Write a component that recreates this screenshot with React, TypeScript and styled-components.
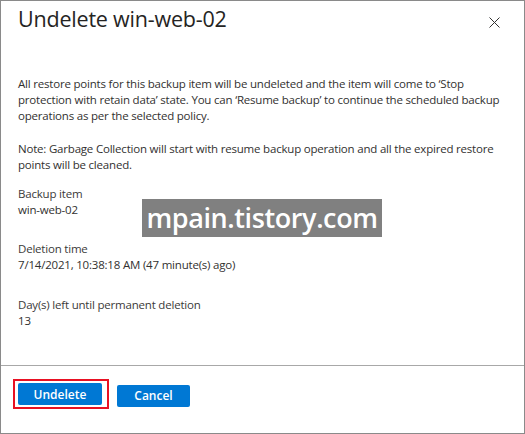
import React from 'react';
import styled, { createGlobalStyle } from 'styled-components';

const GlobalStyle = createGlobalStyle`
  html, body {
    margin: 0;
    padding: 0;
    background: #ffffff;
  }
  body {
    font-family: 'Open Sans', 'Noto Sans', sans-serif;
    color: #323130;
  }
`;

const Dialog = styled.div`
  position: relative;
  width: 525px;
  height: 434px;
  box-sizing: border-box;
  border: 1px solid #8a8a8a;
  background: #ffffff;
  display: flex;
  flex-direction: column;
`;

const Header = styled.div`
  display: flex;
  align-items: flex-start;
  justify-content: space-between;
  padding: 0 23px 0 17px;
  height: 56px;
`;

const Title = styled.h1`
  margin: 0;
  font-size: 21.5px;
  line-height: 36px;
  font-weight: 400;
  color: #252423;
  letter-spacing: -0.2px;
`;

const CloseButton = styled.button`
  margin-top: 14px;
  width: 14px;
  height: 14px;
  padding: 0;
  border: 0;
  background: transparent;
  display: flex;
  align-items: center;
  justify-content: center;
  cursor: pointer;
`;

const Body = styled.div`
  flex: 1;
  padding: 19px 17px 0 17px;
  font-size: 11.5px;
  line-height: 16px;
  letter-spacing: -0.2px;
`;

const Paragraph = styled.p<{ $after: number }>`
  margin: 0 0 ${(p) => p.$after}px 0;
  white-space: nowrap;
`;

const Field = styled.div<{ $gap: number }>`
  margin-top: ${(p) => p.$gap}px;
`;

const Label = styled.div`
  color: #3b3a39;
`;

const Value = styled.div`
  color: #323130;
`;

const Footer = styled.div`
  border-top: 1px solid #a8a8a8;
  height: 68px;
  box-sizing: border-box;
  display: flex;
  align-items: flex-start;
  gap: 8px;
  padding: 13px 0 0 12px;
`;

const Highlight = styled.div`
  border: 2px solid #e81123;
  padding: 2px 5px 2px 3px;
  display: flex;
`;

const Button = styled.button<{ $width: number }>`
  height: 22px;
  width: ${(p) => p.$width}px;
  border: 0;
  border-radius: 2px;
  background: #0078d4;
  color: #ffffff;
  font-family: 'Open Sans', 'Noto Sans', sans-serif;
  font-size: 12px;
  font-weight: 600;
  padding: 0;
  cursor: pointer;
`;

const CancelWrap = styled.div`
  padding-top: 4px;
`;

const Watermark = styled.div`
  position: absolute;
  left: 141px;
  top: 198px;
  width: 240px;
  height: 38px;
  background: #808080;
  color: #ffffff;
  font-size: 27px;
  font-weight: 600;
  line-height: 38px;
  text-align: center;
  letter-spacing: -0.4px;
`;

export default function App() {
  return (
    <>
      <GlobalStyle />
      <Dialog>
        <Header>
          <Title>Undelete win-web-02</Title>
          <CloseButton aria-label="Close">
            <svg width="11" height="11" viewBox="0 0 11 11">
              <path d="M0.5 0.5 L10.5 10.5 M10.5 0.5 L0.5 10.5" stroke="#323130" strokeWidth="1" />
            </svg>
          </CloseButton>
        </Header>
        <Body>
          <Paragraph $after={17}>
            All restore points for this backup item will be undeleted and the item will come to ‘Stop
            <br />
            protection with retain data’ state. You can ‘Resume backup’ to continue the scheduled backup
            <br />
            operations as per the selected policy.
          </Paragraph>
          <Paragraph $after={13}>
            Note: Garbage Collection will start with resume backup operation and all the expired restore
            <br />
            points will be cleaned.
          </Paragraph>
          <Field $gap={0}>
            <Label>Backup item</Label>
            <Value>win-web-02</Value>
          </Field>
          <Field $gap={23}>
            <Label>Deletion time</Label>
            <Value>7/14/2021, 10:38:18 AM (47 minute(s) ago)</Value>
          </Field>
          <Field $gap={24}>
            <Label>Day(s) left until permanent deletion</Label>
            <Value>13</Value>
          </Field>
        </Body>
        <Footer>
          <Highlight>
            <Button $width={84}>Undelete</Button>
          </Highlight>
          <CancelWrap>
            <Button $width={73}>Cancel</Button>
          </CancelWrap>
        </Footer>
        <Watermark>mpain.tistory.com</Watermark>
      </Dialog>
    </>
  );
}
